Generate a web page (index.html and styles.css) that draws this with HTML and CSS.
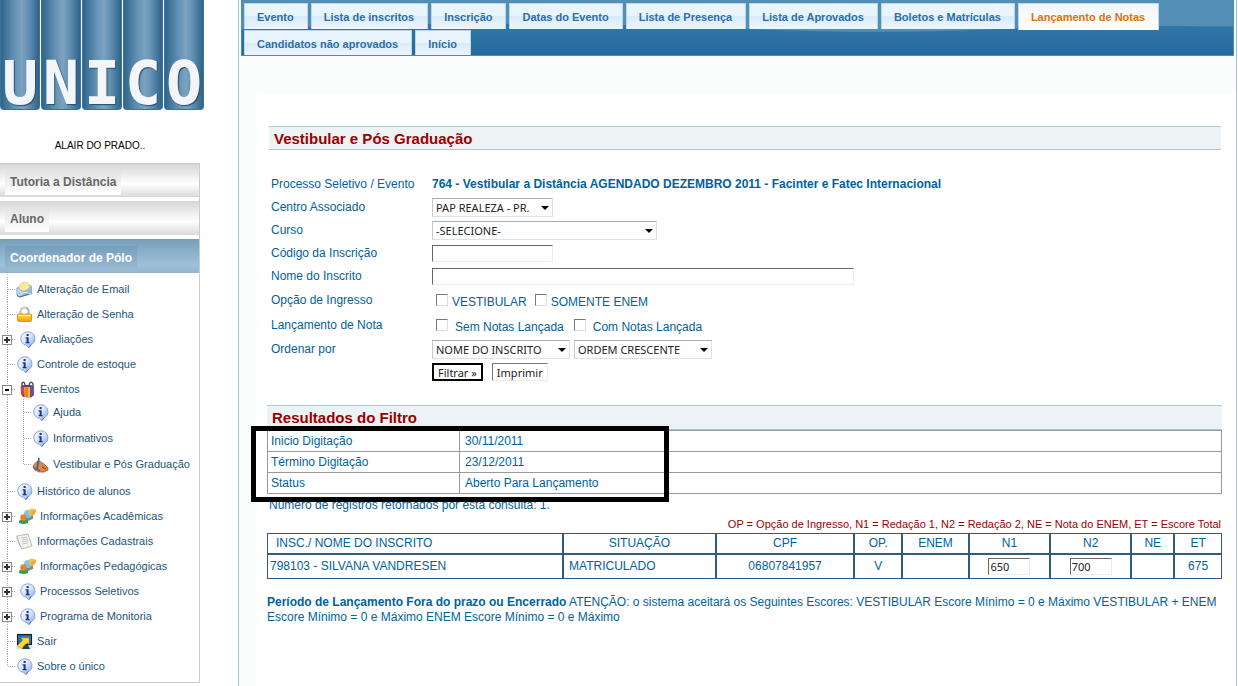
FILE: index.html
```html
<!DOCTYPE html>
<html lang="pt-BR">
<head>
<meta charset="utf-8">
<title>Único - Lançamento de Notas</title>
<link rel="stylesheet" href="styles.css">
</head>
<body>
<svg class="defs" aria-hidden="true">
  <defs>
    <linearGradient id="bubble" x1="0" y1="0" x2="1" y2="1"><stop offset="0" stop-color="#fff"/><stop offset=".5" stop-color="#d3e4fa"/><stop offset="1" stop-color="#7ba3e0"/></linearGradient>
    <linearGradient id="gold" x1="0" y1="0" x2="0" y2="1"><stop offset="0" stop-color="#ffe05a"/><stop offset="1" stop-color="#f0a000"/></linearGradient>
    <linearGradient id="env" x1="0" y1="0" x2="1" y2="1"><stop offset="0" stop-color="#e4f1fc"/><stop offset="1" stop-color="#6b9cd0"/></linearGradient>
    <symbol id="info" viewBox="0 0 17 17"><path d="M8.5 .8a7.4 6.9 0 0 1 3 13.2L10 16.6 7.500 14.400A7.400 6.900 0 0 1 8.500 .8z" fill="url(#bubble)" stroke="#89a3d2"/><path d="M12 13.500L10.200 16.500" stroke="#506fae"/><path d="M7.600 3h2v2h-2zM6.600 6.300h3v4.700h1v1.200h-4V11h1V7.500h-1z" fill="#1b2f96"/></symbol>
    <symbol id="mail" viewBox="0 0 17 17"><path d="M1 7L7.500 2 15 4.500V12L3 16 1 14z" fill="#bcd4ec" stroke="#8ba9cc" stroke-width=".7"/><path d="M3 7C3 2 7 .8 11 1.500L14 6 13 9 5 10z" fill="#fae99c" stroke="#e2c766" stroke-width=".6"/><path d="M1 7l7 4 7.500-5.500L15.800 13 3 16 1 14z" fill="url(#env)" stroke="#7b9cc0" stroke-width=".6"/><path d="M2 15l6-4 7 2" fill="none" stroke="#dcecfb"/><path d="M1 14.500L4 16l9-3" fill="none" stroke="#54677c"/></symbol>
    <symbol id="lock" viewBox="0 0 17 17"><path d="M4.500 9V5a4 3.500 0 0 1 8 0v4" fill="none" stroke="#aeb3b8" stroke-width="2"/><path d="M4.200 5a4 3.500 0 0 1 6-3.500" fill="none" stroke="#e8e8e8"/><rect x="1.500" y="8" width="14" height="7.500" rx="1" fill="url(#gold)" stroke="#dd9512"/><path d="M2.500 9.500h12" stroke="#fff09b"/></symbol>
    <symbol id="gift" viewBox="0 0 17 17"><path d="M2 5l3-1 7 0 3 2v8l-3 2.500-8-.5-2-3z" fill="#633c8a"/><path d="M1.500 5L5 6.500V15L2 12z" fill="#d74920"/><path d="M5 6h6v10.500L5.500 16z" fill="#f6b725"/><path d="M6 6h3v10H6z" fill="#f08022"/><path d="M11 6l4-1v8l-4 3z" fill="#68519d"/><path d="M3 5V2c2-2 3 0 3 3M10 5c0-4 3-5 4-2v3" fill="none" stroke="#4d4d50" stroke-width="1.400"/></symbol>
    <symbol id="hand" viewBox="0 0 17 17"><path d="M1 11C2 7 5 5 8 5.500L12 8l4 4v2l-4 2H7L3 14z" fill="#d98750" stroke="#99532d" stroke-width=".8"/><path d="M4 13l4 1.500M10 11l4 2" fill="none" stroke="#74401f"/><path d="M7 2L5 13" stroke="#39677d" stroke-width="1.700"/><path d="M1.500 11L4 14" stroke="#666" stroke-width="1.200"/></symbol>
    <symbol id="people" viewBox="0 0 17 17"><path d="M5 14l4-9 5-1v6l-5 3z" fill="#369fce"/><circle cx="9" cy="6" r="4" fill="#75c8ed"/><circle cx="13" cy="4" r="3.500" fill="#f4bf4c"/><path d="M11 5l6-4v3l-4 3z" fill="#eda936"/><path d="M0 13q4-5 9 0v2q-4 2-9 0z" fill="#34a04b"/><circle cx="4.500" cy="9.500" r="3.200" fill="#e9803a"/><path d="M9 12l5-2" stroke="#c07b25" stroke-width="1.500"/></symbol>
    <symbol id="paper" viewBox="0 0 17 17"><path d="M1 3l11-2 4 12-10 3-2-3z" fill="#f3f3ef" stroke="#aaaaa2" stroke-width=".8"/><path d="M1 3v3l4 8" fill="none" stroke="#bbb"/><path d="M5 5l6-1M5.500 7l6-1M6 9l6-1M6.500 11l5-1" stroke="#c7c7c0"/><path d="M11 13l5 0-5 2z" fill="#d4d4b8"/></symbol>
    <symbol id="screen" viewBox="0 0 17 17"><path d="M.5 .5h16v16H.5z" fill="#d4e1f0"/><path d="M1 1h15v11H1z" fill="#171f2a"/><path d="M2 2h13v9H2z" fill="#205eb2"/><path d="M2 4h13M2 7h13" stroke="#3e89d5"/><path d="M8 12h4l2 4H6z" fill="#353b45"/><path d="M1 13l6-6-2-2h8v6l-2-1-6 5z" fill="#ffdc28" stroke="#d49b11" stroke-width=".6"/></symbol>
  </defs>
</svg>
<div class="page">
  <aside class="sidebar">
    <div class="logo" role="img" aria-label="Unico"><span>U</span><span>N</span><span>I</span><span>C</span><span>O</span></div>
    <p class="user">ALAIR DO PRADO..</p>
    <nav class="menu">
      <a class="section" href="#"><span>Tutoria a Distância</span></a>
      <a class="section" href="#"><span>Aluno</span></a>
      <a class="section current" href="#"><span>Coordenador de Pólo</span></a>
      <ul class="tree">
        <li><i class="stub"></i><a href="#"><svg class="icon"><use href="#mail"/></svg>Alteração de Email</a></li>
        <li><i class="stub"></i><a href="#"><svg class="icon"><use href="#lock"/></svg>Alteração de Senha</a></li>
        <li><button class="toggle plus" aria-label="Expandir"></button><i class="stub"></i><a href="#"><svg class="icon"><use href="#info"/></svg>Avaliações</a></li>
        <li><i class="stub"></i><a href="#"><svg class="icon"><use href="#info"/></svg>Controle de estoque</a></li>
        <li><button class="toggle" aria-label="Recolher"></button><i class="stub"></i><a href="#"><svg class="icon"><use href="#gift"/></svg>Eventos</a></li>
        <li class="branch">
          <ul>
            <li><i class="stub"></i><a href="#"><svg class="icon"><use href="#info"/></svg>Ajuda</a></li>
            <li><i class="stub"></i><a href="#"><svg class="icon"><use href="#info"/></svg>Informativos</a></li>
            <li class="last"><i class="stub"></i><a href="#"><svg class="icon"><use href="#hand"/></svg>Vestibular e Pós Graduação</a></li>
          </ul>
        </li>
        <li><i class="stub"></i><a href="#"><svg class="icon"><use href="#info"/></svg>Histórico de alunos</a></li>
        <li><button class="toggle plus" aria-label="Expandir"></button><i class="stub"></i><a href="#"><svg class="icon"><use href="#people"/></svg>Informações Acadêmicas</a></li>
        <li><i class="stub"></i><a href="#"><svg class="icon"><use href="#paper"/></svg>Informações Cadastrais</a></li>
        <li><button class="toggle plus" aria-label="Expandir"></button><i class="stub"></i><a href="#"><svg class="icon"><use href="#people"/></svg>Informações Pedagógicas</a></li>
        <li><button class="toggle plus" aria-label="Expandir"></button><i class="stub"></i><a href="#"><svg class="icon"><use href="#info"/></svg>Processos Seletivos</a></li>
        <li><button class="toggle plus" aria-label="Expandir"></button><i class="stub"></i><a href="#"><svg class="icon"><use href="#info"/></svg>Programa de Monitoria</a></li>
        <li><i class="stub"></i><a href="#"><svg class="icon"><use href="#screen"/></svg>Sair</a></li>
        <li class="last"><i class="stub"></i><a href="#"><svg class="icon"><use href="#info"/></svg>Sobre o único</a></li>
      </ul>
    </nav>
  </aside>
  <main class="main">
    <nav class="tabs">
      <a href="#">Evento</a>
      <a href="#">Lista de inscritos</a>
      <a href="#">Inscrição</a>
      <a href="#">Datas do Evento</a>
      <a href="#">Lista de Presença</a>
      <a href="#">Lista de Aprovados</a>
      <a href="#">Boletos e Matrículas</a>
      <a href="#" class="active">Lançamento de Notas</a>
      <a href="#">Candidatos não aprovados</a>
      <a href="#">Início</a>
    </nav>
    <div class="content">
      <h1 class="title">Vestibular e Pós Graduação</h1>
      <form class="filter">
        <div class="row"><span class="label">Processo Seletivo / Evento</span><b>764 - Vestibular a Distância AGENDADO DEZEMBRO 2011 - Facinter e Fatec Internacional</b></div>
        <div class="row"><label class="label" for="centro">Centro Associado</label><select id="centro" class="w-code"><option>PAP REALEZA - PR.</option></select></div>
        <div class="row"><label class="label" for="curso">Curso</label><select id="curso" class="w-course"><option>-SELECIONE-</option></select></div>
        <div class="row"><label class="label" for="codigo">Código da Inscrição</label><input id="codigo" class="field w-code" type="text"></div>
        <div class="row"><label class="label" for="nome">Nome do Inscrito</label><input id="nome" class="field w-name" type="text"></div>
        <div class="row checks"><span class="label">Opção de Ingresso</span><label class="check"><input type="checkbox">VESTIBULAR</label><label class="check"><input type="checkbox">SOMENTE ENEM</label></div>
        <div class="row checks wide"><span class="label">Lançamento de Nota</span><label class="check"><input type="checkbox">Sem Notas Lançada</label><label class="check"><input type="checkbox">Com Notas Lançada</label></div>
        <div class="row"><label class="label" for="ordem">Ordenar por</label><div class="pair"><select id="ordem" class="w-order"><option>NOME DO INSCRITO</option></select><select class="w-order" aria-label="Sentido da ordem"><option>ORDEM CRESCENTE</option></select></div></div>
        <div class="row buttons"><button type="button" class="btn default">Filtrar »</button><button type="button" class="btn">Imprimir</button></div>
      </form>
      <section class="results">
        <h2 class="title">Resultados do Filtro</h2>
        <table class="period">
          <tr><th scope="row">Inicio Digitação</th><td>30/11/2011</td></tr>
          <tr><th scope="row">Término Digitação</th><td>23/12/2011</td></tr>
          <tr><th scope="row">Status</th><td>Aberto Para Lançamento</td></tr>
        </table>
        <div class="marker"></div>
        <p class="count">Número de registros retornados por esta consulta: 1.</p>
        <p class="legend">OP = Opção de Ingresso, N1 = Redação 1, N2 = Redação 2, NE = Nota do ENEM, ET = Escore Total</p>
        <table class="grades">
          <colgroup><col class="c-name"><col class="c-status"><col class="c-cpf"><col class="c-op"><col class="c-enem"><col class="c-note"><col class="c-note"><col class="c-ne"><col class="c-et"></colgroup>
          <tr><th class="left">INSC./ NOME DO INSCRITO</th><th>SITUAÇÃO</th><th>CPF</th><th>OP.</th><th>ENEM</th><th>N1</th><th>N2</th><th>NE</th><th>ET</th></tr>
          <tr><td class="left">798103 - SILVANA VANDRESEN</td><td class="left pad">MATRICULADO</td><td>06807841957</td><td>V</td><td></td><td><input class="field note" type="text" value="650" aria-label="N1"></td><td><input class="field note" type="text" value="700" aria-label="N2"></td><td></td><td>675</td></tr>
        </table>
        <p class="notice"><b>Período de Lançamento Fora do prazo ou Encerrado</b> ATENÇÃO: o sistema aceitará os Seguintes Escores: VESTIBULAR Escore Mínimo = 0 e Máximo VESTIBULAR + ENEM Escore Mínimo = 0 e Máximo ENEM Escore Mínimo = 0 e Máximo</p>
      </section>
    </div>
  </main>
</div>
</body>
</html>
```
FILE: styles.css
```css
* { box-sizing: border-box; }
body { margin: 0; background: #fff; color: #00629b; font: 12px/15px "Liberation Sans", Arial, sans-serif; }
a { color: inherit; text-decoration: none; }
p, h1, h2, ul { margin: 0; padding: 0; }
ul { list-style: none; }
.defs { position: absolute; width: 0; height: 0; }
.page { display: flex; min-height: 100vh; }

/* Sidebar */
.sidebar { flex: 0 0 204px; margin-right: 34px; }
.logo { display: flex; gap: 1px; height: 110px; }
.logo span {
  flex: 1 1 0; min-width: 0; padding-top: 53px; border: 1px solid #3b739a; border-top: 0; border-radius: 0 0 4px 4px;
  background: linear-gradient(90deg, #2f658c, #6391b4 35%, #7ca3c0 55%, #5e8cae 75%, #2d638a);
  color: #f2f6f9; font: bold 60px/60px "DejaVu Sans Mono", monospace;
  text-align: center; text-shadow: 1px 1px 1px #2b4d68;
}
.user { width: 200px; padding: 28px 0 11px; color: #000; font-size: 10px; text-align: center; }
.menu { width: 200px; border: 1px solid #ccc; border-left: 0; border-top: 0; }
.section {
  display: flex; align-items: center; height: 34px; margin-bottom: 4px; padding: 3px 0 0 5px;
  background: linear-gradient(#d6d6d6, #fff 60%, #d9d9d9); color: #666; font-weight: bold;
}
.section span { padding: 5px; background: linear-gradient(#e2e2e2, #fff); }
.section:first-child { margin-top: -1px; border-top: 1px solid #ccc; }
.section.current { margin-bottom: 0; padding-top: 5px; background: linear-gradient(#749fbb, #9fc0d8 75%, #93b5ce); color: #fff; }
.section.current span { background: linear-gradient(#759fbc, #9abbd4); }
.tree { padding: 4px 0 3px; color: #245478; font-size: 11px; }
.tree li {
  display: flex; align-items: center; height: 25px; padding-left: 8px;
  background: repeating-linear-gradient(#aaa 0 1px, #fff 1px 2px) 7px 0 / 1px 100% no-repeat;
}
.tree li.last { background-size: 1px 50%; }
.tree li.branch { height: auto; padding: 0 0 0 16px; }
.branch ul { margin: -3px 0 2px; }
.branch ul li { height: 26px; }
.stub { flex: none; width: 8px; height: 1px; background: repeating-linear-gradient(90deg, #aaa 0 1px, #fff 1px 2px); }
.tree a { display: flex; align-items: center; gap: 4px; white-space: nowrap; }
.icon { width: 17px; height: 17px; }
.toggle {
  flex: none; width: 10px; height: 10px; margin-left: -6px; padding: 0; border: 1px solid #888; border-radius: 0;
  background: linear-gradient(#000, #000) center / 4px 2px no-repeat #fff;
}
.toggle.plus { background: linear-gradient(#333, #333) center / 6px 2px no-repeat, linear-gradient(#333, #333) center / 2px 6px no-repeat, #fff; }
.toggle + .stub { width: 4px; margin-right: 3px; }

/* Main area */
.main {
  display: flex; flex-direction: column; flex: 1; min-width: 0; margin-right: 1px;
  border: 1px solid #9ec5de; border-width: 0 1px; background: linear-gradient(#fbfdfd 93px, #fff 93px);
}
.tabs {
  display: flex; flex-wrap: wrap; gap: 0 3px; margin: 0 2px; padding: 3px 0 0 2px;
  border: 1px solid #4a8dbc; border-top: 0;
  background: url("data:image/svg+xml,%3Csvg xmlns='http://www.w3.org/2000/svg' viewBox='0 0 992 56' preserveAspectRatio='none'%3E%3Cdefs%3E%3ClinearGradient id='a' x2='0' y2='1'%3E%3Cstop stop-color='%233078a8'/%3E%3Cstop offset='1' stop-color='%23246b9d'/%3E%3C/linearGradient%3E%3C/defs%3E%3Cpath fill='%23528eb6' d='M0 0h992v56H0z'/%3E%3Cpath fill='url(%23a)' d='M0 30Q200 20 460 27Q600 35 720 31Q860 25 992 27V56H0z'/%3E%3C/svg%3E") 0 0 / 100% 100%;
  color: #2d6ea5; font-weight: bold; font-size: 11px;
}
.tabs a {
  height: 26px; margin-bottom: 1px; padding: 5px 13px 5px 12px; line-height: 16px; border: 1px solid #b8d8ee; border-bottom: 0;
  background: linear-gradient(#e8f4fe 50%, #d8ebfa 50%, #edf6fd);
}
.tabs a.active { height: 27px; margin-bottom: 0; background: linear-gradient(#f3f7f8, #fdfefe); color: #e17009; }
.tabs a:nth-child(n+9) { margin-bottom: 0; height: 25px; }
.content { flex: 1; padding: 70px 14px 0 10px; border-left: 18px solid #fbfdfd; }
.title { padding: 4px 5px 3px; border: 1px solid #a9c9da; border-width: 1px 0; background: #edf2f5; color: #900; font-size: 15px; line-height: 15px; }
.content > .title { margin: 0 1px 0 2px; }

/* Filter form */
.filter { padding: 23px 4px 0; }
.row { display: flex; align-items: center; height: 23px; }
.label { flex: 0 0 161px; }
.checks { height: 25px; padding-top: 3px; }
.checks .label { margin-top: -3px; }
.check { display: flex; align-items: center; gap: 4px; margin: 0 4px 0 4px; }
.check input {
  appearance: none; width: 12px; height: 12px; margin: -4px 0 0; background: #fff;
  border: 1px solid; border-color: #777 #ddd #ddd #777;
}
.wide .check { gap: 7px; margin-right: 6px; }
.buttons { height: 22px; gap: 9px; padding-left: 161px; }
.pair { display: flex; gap: 4px; }
select, .field, .btn { border-radius: 0; background-color: #fff; color: #222; font: 11px/15px "Noto Sans", Tahoma, sans-serif; }
select {
  appearance: none; height: 19px; padding: 0 18px 0 3px; border: 1px solid; border-color: #aaacb6 #dde1e8 #dde1e8 #c4c8d0;
  background: url("data:image/svg+xml,%3Csvg xmlns='http://www.w3.org/2000/svg' width='8' height='4'%3E%3Cpath d='M0 0h8L4 4z'/%3E%3C/svg%3E") right 3px center no-repeat #fff;
}
.field { height: 17px; padding: 0 1px; border: 1px solid; border-color: #666 #eeeee2 #eeeee2 #666; }
.w-code { width: 121px; }
.w-course { width: 225px; }
.w-name { width: 422px; }
.w-order { width: 138px; }
.btn { height: 18px; padding: 0 4px; border: 1px solid; border-color: #777 #eeeee2 #eeeee2 #777; line-height: 15px; }
.btn.default { border: 2px solid #000; line-height: 13px; }

/* Results */
.results { position: relative; margin-top: 22px; }
.results .title { padding-bottom: 4px; }
.period { width: 100%; border: 1px solid #999; border-top: 0; border-spacing: 0; }
.period th, .period td { height: 21px; padding: 0 3px; border-top: 1px solid #999; font-weight: normal; text-align: left; }
.period th { width: 192px; border-right: 1px solid #999; }
.period td { padding-left: 5px; }
.marker { position: absolute; top: 21px; left: -16px; width: 418px; height: 76px; border: 5px solid #000; }
.count { padding: 4px 2px; }
.legend { padding-right: 1px; color: #900; font-size: 11px; text-align: right; }
.grades { width: 100%; margin-top: 1px; border: 0; border-spacing: 0; table-layout: fixed; }
.grades th, .grades td { height: 21px; padding: 0; border: 1px solid #2e5b87; font-weight: normal; text-align: center; }
.grades td { height: 25px; }
.grades .left { padding-left: 2px; text-align: left; }
.grades th.left { padding-left: 8px; }
.grades .pad { padding-left: 5px; }
.c-name { width: 31%; }
.c-status { width: 16%; }
.c-cpf { width: 14.5%; }
.c-op { width: 5%; }
.c-enem { width: 7%; }
.c-note { width: 8.5%; }
.c-ne { width: 4.5%; }
.c-et { width: 5%; }
.note { display: block; width: 42px; margin: 0 auto; }
.notice { padding-top: 16px; }
```
